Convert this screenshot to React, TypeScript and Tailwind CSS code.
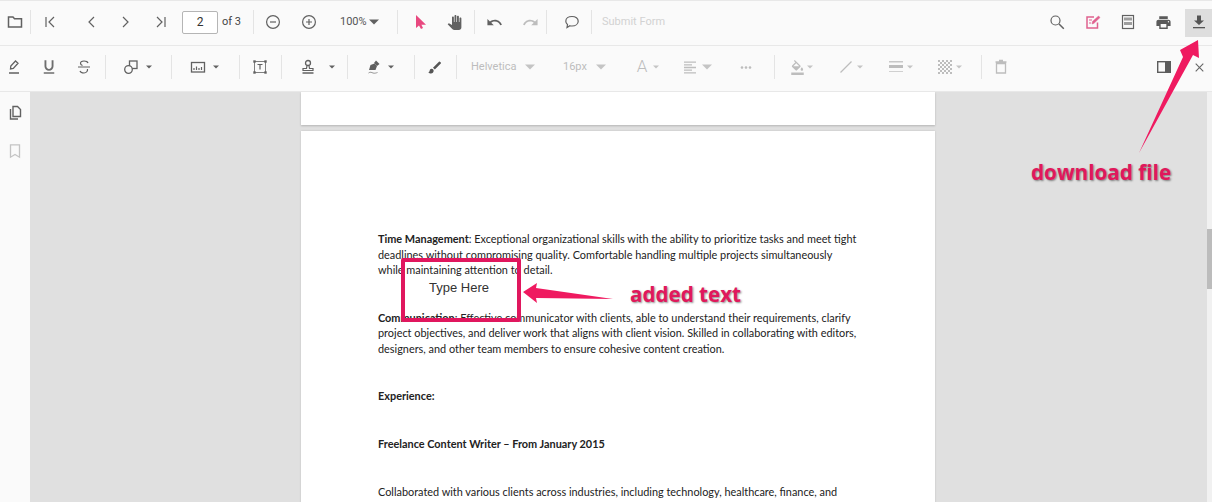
import type { ReactNode } from "react";
import {
  MdBrush,
  MdFormatAlignLeft,
  MdFormatColorFill,
  MdFormatUnderlined,
  MdMoreHoriz,
  MdPanTool,
  MdPrint,
  MdRedo,
  MdUndo,
} from "react-icons/md";

// toolbar helpers: everything sits in fixed-width slots so the icons line up
function Sep({ className = "" }: { className?: string }) {
  return <div className={`h-6 w-px shrink-0 bg-[#e4e4e4] ${className}`} />;
}

function Slot({ className, children }: { className: string; children: ReactNode }) {
  return <div className={`flex shrink-0 items-center justify-center ${className}`}>{children}</div>;
}

function Caret({ small = false, light = false }: { small?: boolean; light?: boolean }) {
  const fill = light ? "#c4c4c4" : "#616161";
  return small ? (
    <svg width="6" height="4" viewBox="0 0 6 4"><path d="M0 .5h6L3 3.5z" fill={fill} /></svg>
  ) : (
    <svg width="10" height="6" viewBox="0 0 10 6"><path d="M0 .5h10L5 5.5z" fill={fill} /></svg>
  );
}

function Ico({ children, color = "#616161", size = 16 }: { children: ReactNode; color?: string; size?: number }) {
  return (
    <svg width={size} height={size} viewBox="0 0 16 16" fill="none" stroke={color} strokeWidth="1.2">
      {children}
    </svg>
  );
}

function TopBar() {
  return (
    <div className="flex h-[46px] items-center border-t border-b border-[#e8e8e8] bg-[#fafafa] pb-[2px]">
      <Slot className="w-[29px]">
        <Ico><path d="M1.5 3h4.5l1.5 1.7h7v8.3h-13z" strokeWidth="1.5" /></Ico>
      </Slot>
      <Sep className="ml-px" />
      <Slot className="ml-px w-[36px]"><Ico><path d="M4 3v10M12 3 7 8l5 5" /></Ico></Slot>
      <Slot className="ml-[5px] w-[35px]"><Ico><path d="M11 3 6 8l5 5" /></Ico></Slot>
      <Slot className="w-[35px]"><Ico><path d="m5 3 5 5-5 5" /></Ico></Slot>
      <Slot className="w-[35px]"><Ico><path d="m4 3 5 5-5 5M12 3v10" /></Ico></Slot>
      <div className="ml-[4px] flex h-[23px] w-[36px] shrink-0 items-center justify-center rounded-[2px] border border-[#b5b5b5] bg-white text-[12px] text-[#333]">2</div>
      <span className="ml-[4px] w-[18px] shrink-0 whitespace-nowrap text-[11px] text-[#444]">of 3</span>
      <Sep className="ml-[13px]" />
      <Slot className="ml-px w-[36px]">
        <Ico><circle cx="8" cy="8" r="6.4" /><path d="M5 8h6" /></Ico>
      </Slot>
      <Slot className="w-[36px]">
        <Ico><circle cx="8" cy="8" r="6.4" /><path d="M5 8h6M8 5v6" /></Ico>
      </Slot>
      <span className="ml-[13px] w-[27px] shrink-0 text-[11px] text-[#555]">100%</span>
      <Slot className="ml-px w-[12px]"><Caret /></Slot>
      <Sep className="ml-[17px]" />
      <Slot className="ml-[4px] w-[35px]">
        <svg width="14" height="16" viewBox="0 0 14 16"><path d="M3 1v13l3-2.5 2 3.5 2-1-1.6-3.3H13z" fill="#e8487f" /></svg>
      </Slot>
      <Slot className="w-[35px]"><MdPanTool size={15} color="#616161" /></Slot>
      <Sep className="ml-[2px]" />
      <Slot className="ml-[1px] w-[36px]"><MdUndo size={17} color="#616161" /></Slot>
      <Slot className="w-[36px]"><MdRedo size={17} color="#bdbdbd" /></Slot>
      <Sep className="-ml-[2px]" />
      <Slot className="ml-[7px] w-[35px]">
        <Ico><path d="M8 2.500c3.600 0 6.200 2 6.200 4.700S11.600 12 8 12c-.8 0-1.500-.1-2.100-.3L3 13.500l.5-3C2.500 9.700 1.800 8.500 1.800 7.200 1.800 4.500 4.400 2.500 8 2.500z" /></Ico>
      </Slot>
      <Sep className="ml-[2px]" />
      <span className="ml-[10px] whitespace-nowrap text-[11px] text-[#d2d2d2]">Submit Form</span>
      <div className="ml-auto flex items-center">
        <Slot className="w-[36px]">
          <Ico><circle cx="6.500" cy="6.500" r="4.500" /><path d="m10 10 4.800 4.800" strokeWidth="1.500" /></Ico>
        </Slot>
        <Slot className="w-[35px]">
          <Ico color="#e0618f">
            <path d="M12.500 8.500V14H2V3h7" strokeWidth="1.500" />
            <path d="m7 10 .5-2.500L13.500 2l1.500 1.500-6 5.800z" fill="#e0618f" strokeWidth=".5" />
            <path d="M4 6h3M4 9h2" />
          </Ico>
        </Slot>
        <Slot className="w-[36px]">
          <Ico>
            <rect x="2.500" y="1.500" width="11" height="13" />
            <rect x="4" y="3.500" width="8" height="3" fill="#9e9e9e" stroke="none" />
            <rect x="4" y="8" width="8" height="3" fill="#9e9e9e" stroke="none" />
          </Ico>
        </Slot>
        <Slot className="w-[35px]"><MdPrint size={17} color="#5a5a5a" /></Slot>
        <Slot className="ml-[4px] mt-[2px] h-[28px] w-[27px] bg-[#dedede] pb-[2px] pl-px">
          <svg width="14" height="16" viewBox="0 0 14 16">
            <path d="M5 1.500h4v5h3L7 11 2 6.500h3z" fill="#555" />
            <rect x="1" y="13" width="12" height="1.300" fill="#555" />
          </svg>
        </Slot>
      </div>
    </div>
  );
}

function AnnotationBar() {
  return (
    <div className="flex h-[46px] items-center border-b border-[#e8e8e8] bg-[#fafafa] pb-[3px]">
      <Slot className="w-[28px]">
        <Ico>
          <path d="m4.500 10 .3-3L9.500 2l2.500 2.200-4.700 5.200z" strokeWidth="1.300" />
          <path d="M3 14h10" strokeWidth="1.500" />
        </Ico>
      </Slot>
      <Slot className="ml-[3px] w-[36px]"><MdFormatUnderlined size={18} color="#6e6e6e" /></Slot>
      <Slot className="w-[34px]">
        <Ico><path d="M12 4c-.5-1.500-2-2-4-2S4.500 2.800 4.500 4.300c0 1.200.7 1.800 2 2.200M2 8h12M11.500 10c.3 2-1 4-3.500 4-2 0-3.500-.8-4-2" /></Ico>
      </Slot>
      <Sep className="ml-[4px]" />
      <Slot className="ml-[16px] w-[18px]">
        <Ico>
          <rect x="6.500" y="2" width="7.500" height="7.500" strokeWidth="1.300" />
          <circle cx="5.500" cy="10.500" r="3.800" fill="#fafafa" strokeWidth="1.300" />
        </Ico>
      </Slot>
      <Slot className="ml-[6px] w-[6px]"><Caret small /></Slot>
      <Sep className="ml-[19px]" />
      <Slot className="ml-[18px] w-[16px]">
        <Ico>
          <rect x="1.500" y="3.500" width="13" height="9.500" strokeWidth="1.300" />
          <path d="M4 11V9M6.500 11V7.500M9 11V9M11.500 11V8" />
        </Ico>
      </Slot>
      <Slot className="ml-[7px] w-[6px]"><Caret small /></Slot>
      <Sep className="ml-[20px]" />
      <Slot className="ml-[11px] w-[18px]">
        <Ico>
          <rect x="2.500" y="2.500" width="11" height="11" strokeWidth=".8" />
          <rect x="1.300" y="1.300" width="2.400" height="2.400" fill="#616161" stroke="none" />
          <rect x="12.300" y="1.300" width="2.400" height="2.400" fill="#616161" stroke="none" />
          <rect x="1.300" y="12.300" width="2.400" height="2.400" fill="#616161" stroke="none" />
          <rect x="12.300" y="12.300" width="2.400" height="2.400" fill="#616161" stroke="none" />
          <path d="M5.500 5.500h5M8 5.500v5" />
        </Ico>
      </Slot>
      <Sep className="ml-[12px]" />
      <Slot className="ml-[18px] w-[16px]">
        <Ico>
          <circle cx="8" cy="4" r="2.500" strokeWidth="1.300" />
          <path d="M7 6.500 6.500 9.500H3V11.500h10V9.500H9.500L9 6.500" strokeWidth="1.200" />
          <path d="M2.500 14h11" strokeWidth="1.500" />
        </Ico>
      </Slot>
      <Slot className="ml-[13px] w-[6px]"><Caret small /></Slot>
      <Sep className="ml-[12px]" />
      <Slot className="ml-[19px] w-[16px]">
        <svg width="16" height="16" viewBox="0 0 16 16">
          <path d="m2 11 1.500-5 4-1.500L10 7 8.500 11z" fill="#5f5f5f" />
          <path d="m7 4 2-2.500L12.500 5 10 7z" fill="#5f5f5f" />
          <path d="M1.500 14c2-1.500 3-.5 4.500 0s3 0 4.500-.5" stroke="#8a8a8a" fill="none" strokeWidth=".9" />
        </svg>
      </Slot>
      <Slot className="ml-[5px] w-[6px]"><Caret small /></Slot>
      <Sep className="ml-[20px]" />
      <Slot className="ml-[12px] w-[16px]"><MdBrush size={17} color="#555" /></Slot>
      <Sep className="ml-[13px]" />
      <span className="ml-[14px] w-[42px] shrink-0 text-[11px] text-[#bdbdbd]">Helvetica</span>
      <Slot className="ml-[12px] w-[10px]"><Caret light /></Slot>
      <span className="ml-[28px] w-[23px] shrink-0 text-[11px] text-[#bdbdbd]">16px</span>
      <Slot className="ml-[10px] w-[10px]"><Caret light /></Slot>
      <span className="ml-[30px] w-[12px] shrink-0 text-center text-[17px] font-light text-[#bdbdbd]">A</span>
      <Slot className="ml-[5px] w-[6px]"><Caret small light /></Slot>
      <Slot className="ml-[23px] w-[16px]"><MdFormatAlignLeft size={17} color="#bdbdbd" /></Slot>
      <Slot className="ml-[4px] w-[10px]"><Caret light /></Slot>
      <Slot className="ml-[26px] w-[16px]"><MdMoreHoriz size={17} color="#bdbdbd" /></Slot>
      <Sep className="ml-[20px]" />
      <Slot className="ml-[14px] w-[16px]"><MdFormatColorFill size={15} color="#bdbdbd" /></Slot>
      <Slot className="ml-[2px] w-[6px]"><Caret small light /></Slot>
      <Slot className="ml-[25px] w-[16px]"><Ico color="#bdbdbd"><path d="M2.500 13.500 13.500 2.500" /></Ico></Slot>
      <Slot className="ml-[3px] w-[6px]"><Caret small light /></Slot>
      <Slot className="ml-[25px] w-[16px]">
        <svg width="16" height="14" viewBox="0 0 16 14">
          <rect x="1" y="1" width="14" height="1.500" fill="#c8c8c8" />
          <rect x="1" y="5" width="14" height="3" fill="#bdbdbd" />
          <rect x="1" y="11" width="14" height="1" fill="#d0d0d0" />
        </svg>
      </Slot>
      <Slot className="ml-[3px] w-[6px]"><Caret small light /></Slot>
      <Slot className="ml-[24px] w-[16px]">
        <svg width="14" height="14" viewBox="0 0 14 14">
          <defs>
            <pattern id="chk" width="4" height="4" patternUnits="userSpaceOnUse">
              <rect width="2" height="2" fill="#bdbdbd" />
              <rect x="2" y="2" width="2" height="2" fill="#bdbdbd" />
            </pattern>
          </defs>
          <rect width="14" height="14" fill="url(#chk)" />
        </svg>
      </Slot>
      <Slot className="ml-[3px] w-[6px]"><Caret small light /></Slot>
      <Sep className="ml-[19px]" />
      <Slot className="ml-[11px] w-[16px]">
        <Ico color="#bdbdbd"><path d="M3.500 4.500h9V14h-9zM2.500 3h11M6 1.500h4" strokeWidth="1.300" /></Ico>
      </Slot>
      <div className="ml-auto flex items-center">
        <Slot className="w-[16px]">
          <svg width="14" height="12" viewBox="0 0 14 12">
            <rect x=".7" y=".7" width="12.600" height="10.600" fill="none" stroke="#5c5c5c" strokeWidth="1.400" />
            <rect x="8" y="1" width="5" height="10" fill="#5c5c5c" />
          </svg>
        </Slot>
        <Slot className="ml-[20px] mr-[4px] w-[16px]">
          <svg width="9" height="9" viewBox="0 0 9 9" className="-translate-x-px"><path d="m.7.7 7.600 7.600M8.300.7.7 8.300" stroke="#666" strokeWidth="1.100" /></svg>
        </Slot>
      </div>
    </div>
  );
}

function Line({ children }: { children: ReactNode }) {
  return <p className="h-[15.700px] whitespace-nowrap text-[10.900px] leading-[15.700px] text-[#222]">{children}</p>;
}

function Document() {
  return (
    <main className="flex-1 overflow-hidden bg-[#e0e0e0]">
      <div className="ml-[271px] h-[33px] w-[634px] bg-white shadow-[0_1px_2px_rgba(0,0,0,0.2)]" />
      <div
        className="ml-[271px] mt-[6px] h-[400px] w-[634px] bg-white pl-[77px] pt-[100px] shadow-[0_0_2px_rgba(0,0,0,0.15)]"
        style={{ fontFamily: "Lato, sans-serif" }}
      >
        <Line><b>Time Management</b>: Exceptional organizational skills with the ability to prioritize tasks and meet tight</Line>
        <Line>deadlines without compromising quality. Comfortable handling multiple projects simultaneously</Line>
        <Line>while maintaining attention to detail.</Line>
        <div className="mt-[31.500px]">
          <Line><b>Communication</b>: Effective communicator with clients, able to understand their requirements, clarify</Line>
          <Line>project objectives, and deliver work that aligns with client vision. Skilled in collaborating with editors,</Line>
          <Line>designers, and other team members to ensure cohesive content creation.</Line>
        </div>
        <div className="mt-[31.500px]"><Line><b>Experience:</b></Line></div>
        <div className="mt-[32px]"><Line><b>Freelance Content Writer – From January 2015</b></Line></div>
        <div className="mt-[32px]"><Line>Collaborated with various clients across industries, including technology, healthcare, finance, and</Line></div>
      </div>
    </main>
  );
}

export default function App() {
  return (
    <div className="relative h-[502px] w-[1212px] overflow-hidden bg-white" style={{ fontFamily: "Roboto, sans-serif" }}>
      <TopBar />
      <AnnotationBar />
      <div className="flex h-[410px]">
        <aside className="flex w-[30px] shrink-0 flex-col items-center gap-[22px] bg-[#fafafa] pt-[13px]">
          <Ico>
            <path d="M6 1.500h4.500l3 3V11.500H6z" strokeWidth="1.400" />
            <path d="M3.500 4v10H11" strokeWidth="1.400" />
          </Ico>
          <Ico color="#c4c4c4"><path d="M3.500 1.800h9v12.400L8 11.500l-4.500 2.700z" strokeWidth="1.300" /></Ico>
        </aside>
        <Document />
        <div className="w-[5px] shrink-0 bg-[#f1f1f1] pt-[137px]">
          <div className="h-[60px] bg-[#bcbcbc]" />
        </div>
      </div>

      {/* callouts drawn on top of the screenshot */}
      <div className="absolute left-[401px] top-[258px] h-[64px] w-[120px] rounded-[2px] border-[4px] border-[#e0175e]">
        <span className="absolute left-[24px] top-[16px] whitespace-nowrap text-[13px] text-[#333]" style={{ fontFamily: "'Liberation Sans', sans-serif" }}>
          Type Here
        </span>
      </div>
      <svg className="absolute left-0 top-0" width="1212" height="502" viewBox="0 0 1212 502">
        <path d="M523 292 537 283 536 288 613 299 536 298 537 303z" fill="#ef1a60" />
        <path d="M1198 40 1199 58 1193 55 1139 153 1183 57 1180 50z" fill="#ef1a60" />
      </svg>
      <span className="absolute left-[630px] top-[280px] whitespace-nowrap text-[20.600px] font-bold leading-[28px] text-[#e0185c] [text-shadow:1px_1px_2px_rgba(0,0,0,0.45)]" style={{ fontFamily: "'Open Sans', sans-serif" }}>
        added text
      </span>
      <span className="absolute left-[1031px] top-[158px] whitespace-nowrap text-[20.700px] font-bold leading-[28px] text-[#e0185c] [text-shadow:1px_1px_2px_rgba(0,0,0,0.45)]" style={{ fontFamily: "'Open Sans', sans-serif" }}>
        download file
      </span>
    </div>
  );
}
